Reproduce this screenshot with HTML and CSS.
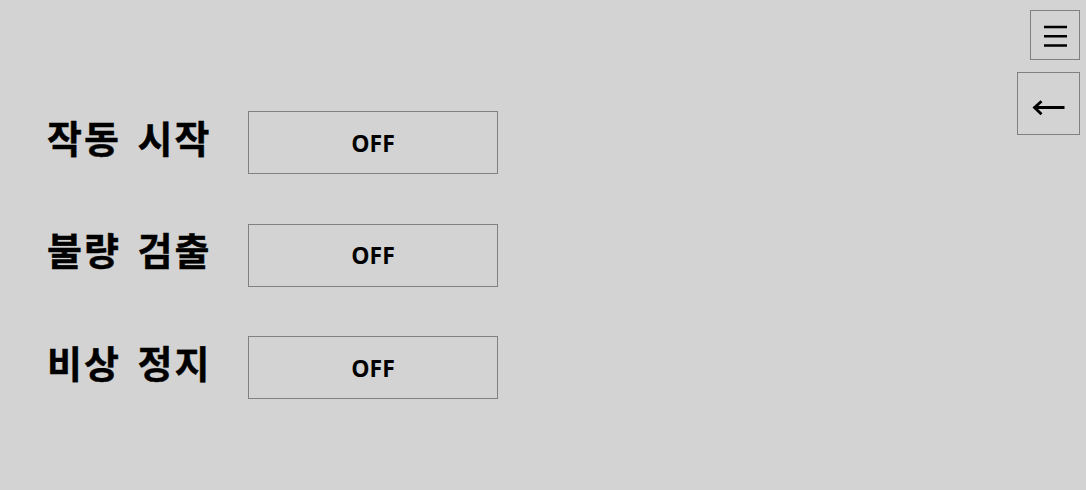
FILE: index.html
```html
<!DOCTYPE html>
<html lang="ko">
<head>
<meta charset="utf-8">
<title>Control</title>
<link rel="stylesheet" href="styles.css">
</head>
<body>
<div class="page">
  <main class="controls">
    <div class="row">
      <span class="label">작동 시작</span>
      <button class="toggle">OFF</button>
    </div>
    <div class="row">
      <span class="label">불량 검출</span>
      <button class="toggle">OFF</button>
    </div>
    <div class="row">
      <span class="label">비상 정지</span>
      <button class="toggle">OFF</button>
    </div>
  </main>
  <aside class="nav">
    <button class="nav-btn menu" aria-label="메뉴">
      <svg class="menu-icon" width="23" height="22" viewBox="0 0 23 22"><path d="M0 2h23M0 11.3h23M0 20.5h23" stroke="#000" stroke-width="2.6" fill="none"/></svg>
    </button>
    <button class="nav-btn back" aria-label="뒤로">
      <svg class="back-icon" width="33" height="16" viewBox="0 0 33 16"><path d="M3 7.5h29.5" stroke="#000" stroke-width="3" fill="none"/><path d="M9.5 1.2L2.5 7.5L9.5 14.3" stroke="#000" stroke-width="2.8" fill="none" stroke-linejoin="miter"/></svg>
    </button>
  </aside>
</div>
</body>
</html>
```
FILE: styles.css
```css
html, body {
  margin: 0;
  padding: 0;
  background: #d3d3d3;
}
body {
  font-family: "Noto Sans CJK KR", "Open Sans", sans-serif;
  width: 1086px;
  height: 490px;
  overflow: hidden;
}
.page {
  display: flex;
  justify-content: space-between;
  align-items: flex-start;
}
.controls {
  display: flex;
  flex-direction: column;
  gap: 49.5px;
  padding: 111px 0 0 47px;
}
.row {
  display: flex;
  align-items: center;
}
.label {
  width: 201px;
  font-size: 38px;
  font-weight: 700;
  color: #000;
  line-height: 1;
  margin-top: -12px;
  letter-spacing: 2px;
  word-spacing: 4px;
  -webkit-text-stroke: 0.4px #000;
}
.toggle {
  width: 250px;
  height: 63px;
  background: #d3d3d3;
  border: 1px solid #808080;
  font-family: "Open Sans", sans-serif;
  font-weight: 700;
  font-size: 23px;
  color: #000;
  padding: 0;
  margin: 0;
}
.nav {
  display: flex;
  flex-direction: column;
  align-items: flex-end;
  gap: 12px;
  padding: 10px 6px 0 0;
}
.nav-btn {
  display: flex;
  align-items: center;
  justify-content: center;
  background: #d3d3d3;
  border: 1px solid #808080;
  padding: 0;
  margin: 0;
}
.menu {
  width: 50px;
  height: 50px;
  padding-top: 2px;
}
.back {
  width: 63px;
  height: 63px;
  padding-top: 9px;
}
```
